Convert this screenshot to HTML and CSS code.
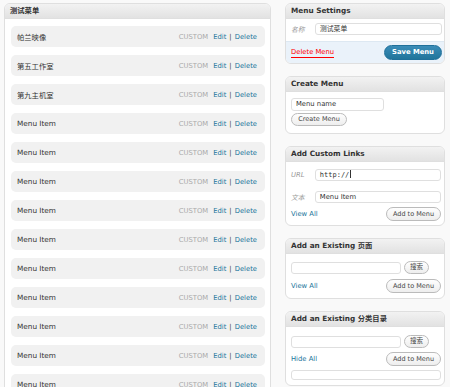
FILE: index.html
```html
<html>
	<head>
		<title>Menus</title>
		<meta charset="UTF-8">
		<link rel="stylesheet" href="styles.css">
	</head>
	<body>
		<div class="wrap">
			<div class="menu-panel">
				<div class="box-head">测试菜单</div>
				<div class="menu-items">
					<div class="item"><span class="title">帕兰映像</span><span class="type">CUSTOM</span><a href="#">Edit</a><span class="sep">|</span><a href="#">Delete</a></div>
					<div class="item"><span class="title">第五工作室</span><span class="type">CUSTOM</span><a href="#">Edit</a><span class="sep">|</span><a href="#">Delete</a></div>
					<div class="item"><span class="title">第九主机室</span><span class="type">CUSTOM</span><a href="#">Edit</a><span class="sep">|</span><a href="#">Delete</a></div>
					<div class="item"><span class="title">Menu Item</span><span class="type">CUSTOM</span><a href="#">Edit</a><span class="sep">|</span><a href="#">Delete</a></div>
					<div class="item"><span class="title">Menu Item</span><span class="type">CUSTOM</span><a href="#">Edit</a><span class="sep">|</span><a href="#">Delete</a></div>
					<div class="item"><span class="title">Menu Item</span><span class="type">CUSTOM</span><a href="#">Edit</a><span class="sep">|</span><a href="#">Delete</a></div>
					<div class="item"><span class="title">Menu Item</span><span class="type">CUSTOM</span><a href="#">Edit</a><span class="sep">|</span><a href="#">Delete</a></div>
					<div class="item"><span class="title">Menu Item</span><span class="type">CUSTOM</span><a href="#">Edit</a><span class="sep">|</span><a href="#">Delete</a></div>
					<div class="item"><span class="title">Menu Item</span><span class="type">CUSTOM</span><a href="#">Edit</a><span class="sep">|</span><a href="#">Delete</a></div>
					<div class="item"><span class="title">Menu Item</span><span class="type">CUSTOM</span><a href="#">Edit</a><span class="sep">|</span><a href="#">Delete</a></div>
					<div class="item"><span class="title">Menu Item</span><span class="type">CUSTOM</span><a href="#">Edit</a><span class="sep">|</span><a href="#">Delete</a></div>
					<div class="item"><span class="title">Menu Item</span><span class="type">CUSTOM</span><a href="#">Edit</a><span class="sep">|</span><a href="#">Delete</a></div>
					<div class="item"><span class="title">Menu Item</span><span class="type">CUSTOM</span><a href="#">Edit</a><span class="sep">|</span><a href="#">Delete</a></div>
				</div>
			</div>
			<div class="side">
				<div class="box">
					<div class="box-head">Menu Settings</div>
					<div class="settings-row">
						<span class="label">名称</span>
						<span class="field wide">测试菜单</span>
					</div>
					<div class="actions">
						<a href="#" class="delete-menu">Delete Menu</a>
						<span class="save-btn">Save Menu</span>
					</div>
				</div>
				<div class="box create">
					<div class="box-head">Create Menu</div>
					<div class="box-body">
						<span class="field name">Menu name</span>
						<span class="btn create-btn">Create Menu</span>
					</div>
				</div>
				<div class="box links">
					<div class="box-head">Add Custom Links</div>
					<div class="box-body">
						<div class="field-row">
							<span class="label">URL</span>
							<span class="field wide mono">http://<span class="caret"></span></span>
						</div>
						<div class="field-row second">
							<span class="label">文本</span>
							<span class="field wide">Menu Item</span>
						</div>
						<div class="foot-row">
							<a href="#">View All</a>
							<span class="btn add-btn">Add to Menu</span>
						</div>
					</div>
				</div>
				<div class="box pages">
					<div class="box-head">Add an Existing 页面</div>
					<div class="box-body">
						<div class="search-row">
							<span class="field search"></span>
							<span class="btn search-btn">搜索</span>
						</div>
						<div class="foot-row">
							<a href="#">View All</a>
							<span class="btn add-btn">Add to Menu</span>
						</div>
					</div>
				</div>
				<div class="box cats">
					<div class="box-head">Add an Existing 分类目录</div>
					<div class="box-body">
						<div class="search-row">
							<span class="field search"></span>
							<span class="btn search-btn">搜索</span>
						</div>
						<div class="foot-row">
							<a href="#">Hide All</a>
							<span class="btn add-btn">Add to Menu</span>
						</div>
						<div class="cat-list"></div>
					</div>
				</div>
			</div>
		</div>
	</body>
</html>
```

FILE: styles.css
```css
html, body {
	margin: 0;
	height: 387px;
	overflow: hidden;
}
body {
	background: #f9f9f9;
	color: #333;
	font-family: "DejaVu Sans", Verdana, "Noto Sans CJK SC", sans-serif;
	font-size: 6.8px;
}
a {
	color: #21759b;
	text-decoration: none;
}
.wrap {
	display: flex;
	align-items: flex-start;
	gap: 14px;
	padding: 3px 0 0 4px;
}
.box-head {
	height: 14px;
	line-height: 14px;
	padding: 0 5px;
	font-weight: bold;
	font-size: 7.3px;
	color: #333;
	background: linear-gradient(#f2f2f2, #e2e2e2);
	border-bottom: 1px solid #dfdfdf;
	border-radius: 5px 5px 0 0;
}
.menu-panel {
	width: 265px;
	border: 1px solid #dfdfdf;
	border-radius: 6px 6px 0 0;
	background: #fff;
}
.menu-items {
	padding: 7px 5px 0 6px;
}
.item {
	display: flex;
	align-items: center;
	height: 21px;
	margin-bottom: 8px;
	padding: 0 8px 0 6px;
	background: #f1f1f1;
	border-radius: 5px;
}
.item .title {
	flex: 1;
	font-size: 7.3px;
}
.item .type {
	color: #aaa;
	margin-right: 5px;
}
.item .sep {
	margin: 0 3px;
	color: #333;
}
.side {
	width: 160px;
}
.box {
	border: 1px solid #dfdfdf;
	border-radius: 6px;
	background: #fff;
	margin-bottom: 12px;
}
.label {
	width: 24px;
	color: #999;
	font-style: italic;
}
.field {
	display: block;
	box-sizing: border-box;
	height: 12px;
	line-height: 10px;
	padding: 0 4px;
	border: 1px solid #dfdfdf;
	border-radius: 3px;
	background: #fff;
	color: #333;
}
.field.wide {
	width: 127px;
}
.mono {
	font-family: "DejaVu Sans Mono", monospace;
	font-size: 7px;
}
.caret {
	display: inline-block;
	width: 1px;
	height: 8px;
	margin-left: 1px;
	vertical-align: -1px;
	background: #333;
}
.settings-row, .field-row {
	display: flex;
	align-items: center;
}
.settings-row {
	padding: 4px 0 6px 5px;
}
.actions {
	display: flex;
	align-items: center;
	justify-content: space-between;
	height: 21px;
	padding: 0 2px 0 5px;
	background: #eaf2fa;
	border-top: 1px solid #dde8f2;
	border-radius: 0 0 5px 5px;
}
.delete-menu {
	color: #f00;
	border-bottom: 1px solid #f00;
	padding-bottom: 1px;
}
.save-btn {
	width: 58px;
	height: 15px;
	box-sizing: border-box;
	line-height: 13px;
	text-align: center;
	color: #fff;
	font-weight: bold;
	background: linear-gradient(#3a8cb8, #21759b);
	border: 1px solid #20709a;
	border-radius: 8px;
}
.btn {
	display: block;
	box-sizing: border-box;
	height: 13px;
	line-height: 11px;
	text-align: center;
	color: #464646;
	font-size: 6.5px;
	background: linear-gradient(#fefefe, #eeeeee);
	border: 1px solid #bbb;
	border-radius: 8px;
}
.box-body {
	padding: 6px 3px 7px 5px;
}
.create .field.name {
	width: 93px;
	height: 13px;
	line-height: 11px;
}
.create-btn {
	width: 56px;
	margin-top: 2px;
}
.links .box-body {
	padding: 7px 3px 4px 5px;
}
.field-row.second {
	margin-top: 10px;
}
.foot-row {
	display: flex;
	align-items: center;
	justify-content: space-between;
	margin-top: 4px;
}
.add-btn {
	width: 55px;
	height: 14px;
	line-height: 12px;
}
.search-row {
	display: flex;
	align-items: center;
	gap: 3px;
}
.field.search {
	width: 110px;
}
.search-btn {
	width: 25px;
}
.pages .box-body {
	padding: 7px 3px 5px 5px;
}
.pages .foot-row {
	margin-top: 5px;
}
.cats .box-body {
	padding: 8px 3px 5px 5px;
}
.cat-list {
	height: 10px;
	width: 150px;
	margin-top: 4px;
	border: 1px solid #dfdfdf;
	border-radius: 3px;
	box-sizing: border-box;
}
```
